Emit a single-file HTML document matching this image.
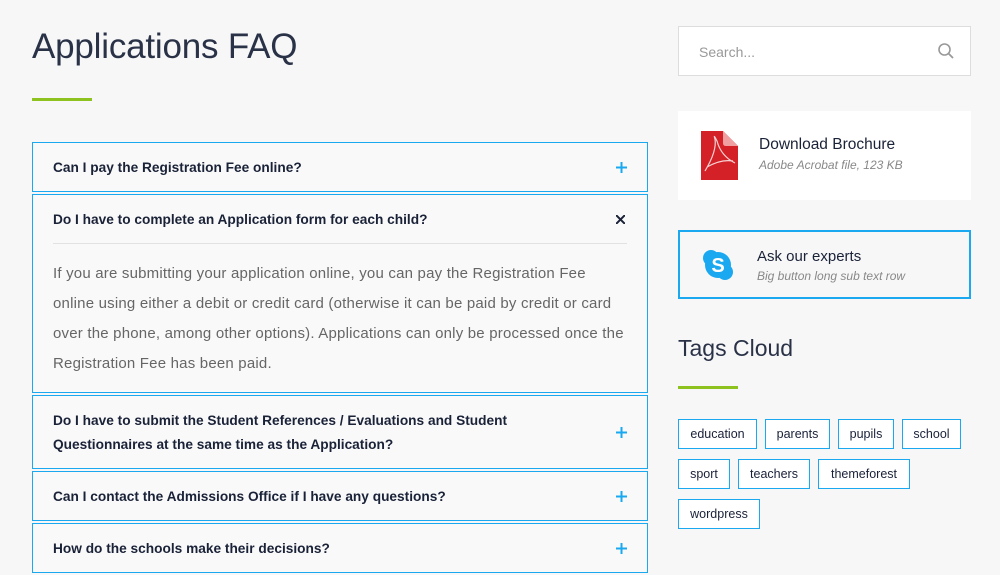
<!DOCTYPE html>
<html><head><meta charset="utf-8"><style>
*{margin:0;padding:0;box-sizing:border-box}
body{width:1000px;height:575px;background:#f7f7f7;font-family:"Liberation Sans",sans-serif;color:#1a2238;position:relative;overflow:hidden}
.a{position:absolute}
h1{position:absolute;left:32px;top:27px;font-size:35px;font-weight:normal;color:#2a3248;letter-spacing:-0.2px}
.g{position:absolute;height:3px;background:#8dc21f;width:60px}
.item{position:absolute;left:32px;width:616px;border:1px solid #1aa9f0;background:#f9f9f9}
.q{position:absolute;left:20px;font-size:13.7px;font-weight:bold;color:#1a2238;line-height:24px}
.ic{position:absolute;right:20px}
.tag{position:absolute;height:30px;border:1px solid #1aa9f0;background:#fff;font-size:12.5px;line-height:28px;text-align:center;color:#1a2238}
</style></head><body>
<h1>Applications FAQ</h1>
<div class="g" style="left:32px;top:98px"></div>

<div class="item" style="top:142px;height:50px"><div class="q" style="top:13px">Can I pay the Registration Fee online?</div><svg class="ic" style="top:19px" width="11" height="11"><path d="M5.5 0V11M0 5.5H11" stroke="#1aa9f0" stroke-width="2"/></svg></div>
<div class="item" style="top:194px;height:199px"><div class="q" style="top:13px">Do I have to complete an Application form for each child?</div><svg class="ic" style="top:20px;right:22px" width="9" height="9"><path d="M0 0L9 9M9 0L0 9" stroke="#1a2238" stroke-width="2"/></svg>
<div class="a" style="left:20px;right:20px;top:48px;height:1px;background:#e2e2e2"></div>
<div class="a" style="left:20px;top:64px;white-space:nowrap;font-size:15px;letter-spacing:0.2px;line-height:30px;color:#666">If you are submitting your application online, you can pay the Registration Fee<br>online using either a debit or credit card (otherwise it can be paid by credit or card<br>over the phone, among other options). Applications can only be processed once the<br>Registration Fee has been paid.</div></div>
<div class="item" style="top:395px;height:74px"><div class="q" style="top:13px">Do I have to submit the Student References / Evaluations and Student<br>Questionnaires at the same time as the Application?</div><svg class="ic" style="top:31px" width="11" height="11"><path d="M5.5 0V11M0 5.5H11" stroke="#1aa9f0" stroke-width="2"/></svg></div>
<div class="item" style="top:471px;height:50px"><div class="q" style="top:13px">Can I contact the Admissions Office if I have any questions?</div><svg class="ic" style="top:19px" width="11" height="11"><path d="M5.5 0V11M0 5.5H11" stroke="#1aa9f0" stroke-width="2"/></svg></div>
<div class="item" style="top:523px;height:50px"><div class="q" style="top:13px">How do the schools make their decisions?</div><svg class="ic" style="top:19px" width="11" height="11"><path d="M5.5 0V11M0 5.5H11" stroke="#1aa9f0" stroke-width="2"/></svg></div>

<div class="a" style="left:678px;top:26px;width:293px;height:50px;background:#fff;border:1px solid #ddd">
<div class="a" style="left:20px;top:17px;font-size:14px;color:#999">Search...</div>
<svg class="a" style="left:258px;top:15px" width="18" height="18" viewBox="0 0 18 18"><circle cx="7.5" cy="7.5" r="5.5" fill="none" stroke="#999" stroke-width="1.6"/><path d="M11.5 11.5L16 16" stroke="#999" stroke-width="1.8"/></svg></div>

<div class="a" style="left:678px;top:111px;width:293px;height:89px;background:#fff">
<svg class="a" style="left:23px;top:20px" width="37" height="49" viewBox="0 0 37 49"><path d="M0 0H22L37 15V49H0Z" fill="#d42127"/><path d="M22 0L37 15H25Q22 15 22 12Z" fill="#f0a0a0"/><path d="M4 40Q16 20 14 8Q12 2 16 10Q20 25 34 32M6 36Q20 28 32 30" fill="none" stroke="#fff" stroke-width="1.2" opacity=".8"/></svg>
<div class="a" style="left:81px;top:25px;font-size:15.5px;color:#1a2238">Download Brochure</div>
<div class="a" style="left:81px;top:47px;font-size:12px;font-style:italic;color:#888">Adobe Acrobat file, 123 KB</div></div>

<div class="a" style="left:678px;top:230px;width:293px;height:69px;border:2px solid #1aa9f0;background:#f7f7f7">
<svg class="a" style="left:22px;top:17px" width="32" height="32" viewBox="0 0 32 32"><circle cx="9" cy="9" r="8" fill="#1aa9f0"/><circle cx="23" cy="23" r="8" fill="#1aa9f0"/><circle cx="16" cy="16" r="13" fill="#1aa9f0"/><text x="16" y="23" text-anchor="middle" font-family="Liberation Sans" font-weight="bold" font-size="20" fill="#fff">S</text></svg>
<div class="a" style="left:77px;top:16px;font-size:15px;color:#1a2238">Ask our experts</div>
<div class="a" style="left:77px;top:37px;font-size:12px;font-style:italic;color:#888">Big button long sub text row</div></div>

<div class="a" style="left:678px;top:335px;font-size:23px;color:#2a3248">Tags Cloud</div>
<div class="g" style="left:678px;top:386px"></div>

<div class="tag" style="left:678px;top:419px;width:79px">education</div>
<div class="tag" style="left:765px;top:419px;width:65px">parents</div>
<div class="tag" style="left:838px;top:419px;width:56px">pupils</div>
<div class="tag" style="left:902px;top:419px;width:59px">school</div>
<div class="tag" style="left:678px;top:459px;width:52px">sport</div>
<div class="tag" style="left:738px;top:459px;width:72px">teachers</div>
<div class="tag" style="left:818px;top:459px;width:92px">themeforest</div>
<div class="tag" style="left:678px;top:499px;width:82px">wordpress</div>
</body></html>
